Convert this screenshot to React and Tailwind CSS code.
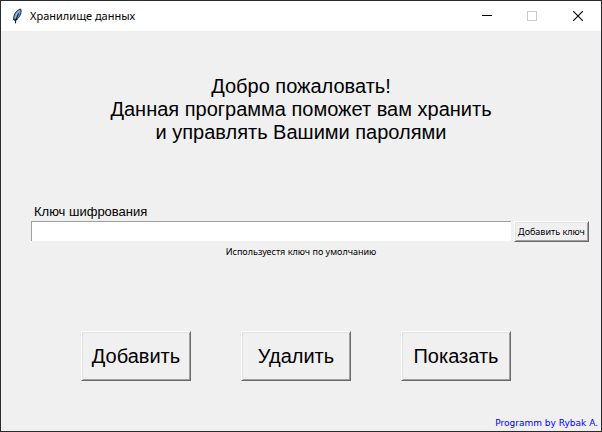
const bevel =
  "border border-t-white border-l-white border-b-[#696969] border-r-[#696969] shadow-[inset_1px_1px_0_#e3e3e3,inset_-1px_-1px_0_#a0a0a0] bg-[#f0f0f0] text-black whitespace-nowrap";

function Feather() {
  return (
    <svg width="16" height="16" viewBox="0 0 16 16" aria-hidden="true">
      <path d="M11.6 0.9C8.4 1.8 5.2 5.2 4.8 8.6L4.5 11.6L6.8 12.2C10 10.2 12 6.8 12.2 3Z" fill="#5f97d8" stroke="#1c2530" strokeWidth="0.9" />
      <path d="M10.4 2.8C8.4 4.4 7 6.8 6.4 9.4" fill="none" stroke="#a9cdf2" strokeWidth="1" />
      <path d="M9.6 5.4L6.8 12L6.4 15.4" fill="none" stroke="#101418" strokeWidth="1" />
      <path d="M8.4 11L6.2 12.4L4.6 11.4" fill="none" stroke="#101418" strokeWidth="1.1" />
    </svg>
  );
}

function TitleBar() {
  return (
    <header className="flex h-[30px] items-center bg-white pl-2">
      <Feather />
      <h1 className="ml-[5px] flex-1 font-['Noto_Sans',sans-serif] text-[11px] leading-4 text-black">
        Хранилище данных
      </h1>
      <button type="button" aria-label="Свернуть" className="flex h-full w-11 items-center justify-center">
        <svg width="10" height="10" viewBox="0 0 10 10" shapeRendering="crispEdges">
          <path d="M0 4.5H10" stroke="#000" />
        </svg>
      </button>
      <button type="button" aria-label="Развернуть" disabled className="flex h-full w-[46px] items-center justify-center">
        <svg width="10" height="10" viewBox="0 0 10 10" shapeRendering="crispEdges">
          <path d="M0.5 0.5H9.5V9.5H0.5Z" fill="none" stroke="#ccc" />
        </svg>
      </button>
      <button type="button" aria-label="Закрыть" className="flex h-full w-[46px] items-center justify-center">
        <svg width="10" height="10" viewBox="0 0 10 10">
          <path d="M0 0L10 10M10 0L0 10" stroke="#000" strokeWidth="1.1" />
        </svg>
      </button>
    </header>
  );
}

export default function App() {
  return (
    <div className="flex min-h-screen flex-col border border-[#2b2b2f] bg-[#f0f0f0] font-['Liberation_Sans',Arial,sans-serif] text-black">
      <TitleBar />
      <main className="flex flex-1 flex-col">
        <p className="mt-11 text-center text-[20px] leading-[23px]">
          Добро пожаловать!
          <br />
          Данная программа поможет вам хранить
          <br />и управлять Вашими паролями
        </p>

        <section className="mt-[60px] pr-3 pl-[30px]">
          <label htmlFor="key" className="block pl-[3px] text-[13px] leading-4">
            Ключ шифрования
          </label>
          <div className="mt-px flex items-start gap-[3px]">
            <input
              id="key"
              type="text"
              className="h-5 min-w-0 flex-1 border-t border-l border-[#a0a0a0] bg-white px-1 text-[13px] outline-none"
            />
            <button type="button" className={`${bevel} h-[21px] w-[75px] font-['Noto_Sans',sans-serif] text-[9px] leading-3`}>
              Добавить ключ
            </button>
          </div>
        </section>
        <p className="mt-1 text-center font-['Noto_Sans',sans-serif] text-[9px] leading-3">Используестя ключ по умолчанию</p>

        <div className="mt-[73px] flex justify-center gap-[50px] pr-2.5 text-[20px]">
          <button type="button" className={`${bevel} h-[50px] w-[110px]`}>Добавить</button>
          <button type="button" className={`${bevel} h-[50px] w-[110px]`}>Удалить</button>
          <button type="button" className={`${bevel} h-[50px] w-[110px]`}>Показать</button>
        </div>

        <footer className="mt-auto pr-[3px] pb-0.5 text-right font-['DejaVu_Sans',sans-serif] text-[9px] leading-3 text-[#0000ff]">
          Programm by Rybak A.
        </footer>
      </main>
    </div>
  );
}
